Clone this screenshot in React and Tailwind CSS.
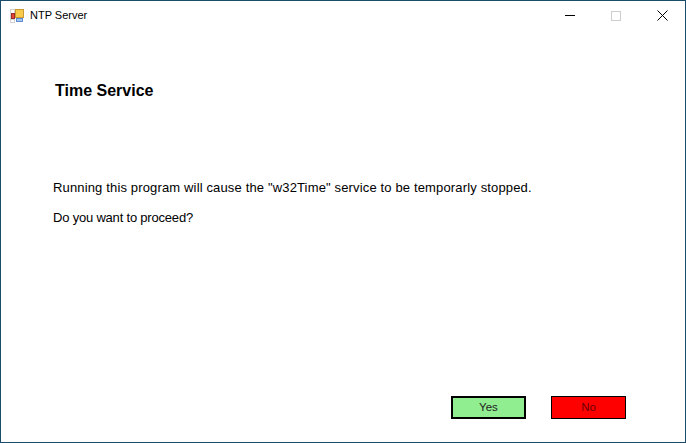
const font = { fontFamily: '"Liberation Sans", Arial, sans-serif' };

function AppIcon() {
  return (
    <svg width="14" height="14" viewBox="0 0 14 14" className="shrink-0">
      <rect x="0" y="0" width="14" height="14" fill="#d2d2d2" />
      <rect x="1" y="1" width="3" height="3" fill="#ffffff" />
      <rect x="1" y="11" width="3" height="2" fill="#ffffff" />
      <rect x="5" y="9" width="9" height="5" fill="#ffffff" />
      <rect x="1" y="4" width="4" height="6" fill="#9c2a2a" />
      <rect x="2" y="5" width="2" height="4" fill="#e2483a" />
      <rect x="5" y="0" width="9" height="9" fill="#c79a32" />
      <rect x="6" y="1" width="7" height="7" fill="#f8cb4a" />
      <rect x="6" y="9" width="7" height="4" fill="#5c8bd2" />
      <rect x="7" y="10" width="5" height="2" fill="#a3c8f0" />
    </svg>
  );
}

export default function App() {
  return (
    <div style={font} className="flex h-[443px] w-[686px] flex-col overflow-hidden border border-[#1b4d6b] bg-white text-black">
      <div className="flex h-[29px] shrink-0 items-center pl-[9px]">
        <AppIcon />
        <span className="ml-[6px] text-[11px]">NTP Server</span>
        <div className="ml-auto flex h-full">
          <div className="flex w-[46px] items-center justify-center">
            <div className="h-px w-[10px] bg-black" />
          </div>
          <div className="flex w-[46px] items-center justify-center">
            <div className="h-[10px] w-[10px] border border-[#cccccc]" />
          </div>
          <div className="flex w-[46px] items-center justify-center">
            <svg width="11" height="11" viewBox="0 0 11 11">
              <path d="M0.5 0.5L10.5 10.5M10.5 0.5L0.5 10.5" stroke="#000" strokeWidth="1" fill="none" />
            </svg>
          </div>
        </div>
      </div>

      <div className="flex flex-1 flex-col pl-[52px]">
        <h1 className="ml-[2px] mt-[51px] text-base leading-[20px] font-bold">Time Service</h1>
        <p className="mt-[79px] text-[13px] leading-[16px] tracking-[0.15px] whitespace-nowrap">
          Running this program will cause the "w32Time" service to be temporarly stopped.
        </p>
        <p className="mt-[14px] text-[13px] leading-[16px] tracking-[-0.2px]">Do you want to proceed?</p>

        <div className="mt-auto mb-[23px] flex justify-end gap-[25px] pr-[59px]">
          <button className="h-[23px] w-[75px] border-[2px] border-black bg-[#90ee90] text-[11.5px] text-[#222]">Yes</button>
          <button className="h-[23px] w-[75px] border border-black bg-[#ff0000] text-[11.5px] text-[#6b0000]">No</button>
        </div>
      </div>
    </div>
  );
}
